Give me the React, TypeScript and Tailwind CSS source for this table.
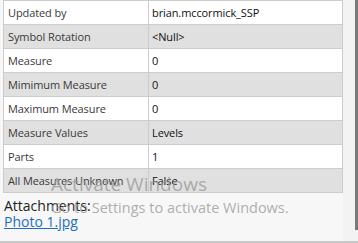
type Row = { label: string; value: string };

const rows: Row[] = [
  { label: "Updated by", value: "brian.mccormick_SSP" },
  { label: "Symbol Rotation", value: "<Null>" },
  { label: "Measure", value: "0" },
  { label: "Mimimum Measure", value: "0" },
  { label: "Maximum Measure", value: "0" },
  { label: "Measure Values", value: "Levels" },
  { label: "Parts", value: "1" },
  { label: "All Measures Unknown", value: "False" },
];

const App = () => {
  return (
    <div className="relative flex h-[243px] w-[358px] flex-col overflow-hidden bg-[#f7f7f7] font-['Open_Sans','Noto_Sans',sans-serif] text-[11px] tracking-[-0.1px]">
      <div className="flex flex-1">
        {/* popup body */}
        <div className="flex-1 pl-[3px]">
          <table className="w-[340px] border-collapse">
            <tbody>
              {rows.map((row, i) => (
                <tr
                  key={row.label}
                  className={i % 2 === 0 ? "bg-white" : "bg-[#e0e0e0]"}
                >
                  <td className="h-[24px] w-[145px] border border-[#cccccc] pl-[4px] leading-none text-[#3a3a3a]">
                    {row.label}
                  </td>
                  <td className="h-[24px] border border-[#cccccc] pl-[3px] leading-none text-[#111]">
                    {row.value}
                  </td>
                </tr>
              ))}
            </tbody>
          </table>
          <div className="mt-[5px] pl-[1px] text-[14px] leading-[16px] tracking-normal text-[#222]">
            Attachments:
          </div>
          <a
            href="#"
            className="block pl-[1px] text-[14px] leading-[16px] tracking-normal text-[#1f6fb8] underline"
          >
            Photo 1.jpg
          </a>
        </div>
        {/* scrollbar strip */}
        <div className="flex w-[15px] bg-[#f3f3f3]">
          <div className="ml-auto h-[230px] w-[3px] bg-[#7a7a7a]" />
        </div>
      </div>
      <div className="h-[2px] bg-[#c8c8c8]" />

      {/* activation watermark */}
      <div className="pointer-events-none absolute left-[51px] top-[172px] tracking-normal text-[#9a9a9a]/80">
        <div className="text-[19px] leading-[24px]">Activate Windows</div>
        <div className="mt-[3px] text-[14.5px] leading-[18px]">Go to Settings to activate Windows.</div>
      </div>
    </div>
  );
};

export default App;
